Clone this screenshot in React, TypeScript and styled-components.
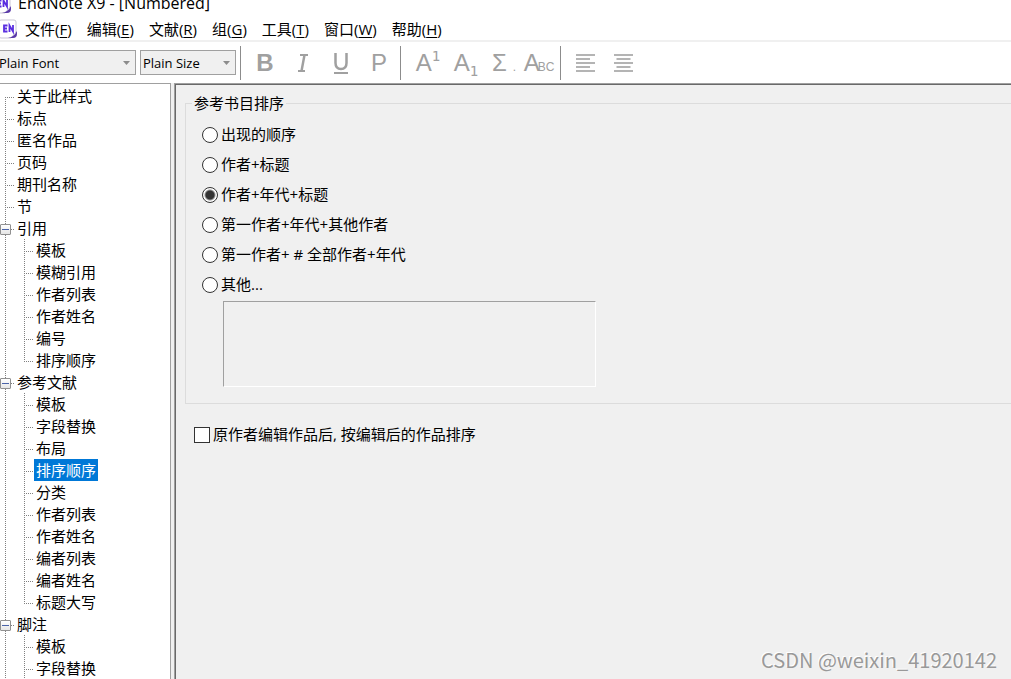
import React, { useState } from "react";
import styled, { createGlobalStyle, css } from "styled-components";

const ui = `"Open Sans", "Noto Sans CJK SC", sans-serif`;

const GlobalStyle = createGlobalStyle`
  * { box-sizing: border-box; }
  body {
    margin: 0;
    overflow: hidden;
    background: #fff;
    color: #000;
    font: 15px/22px ${ui};
  }
  button, select, textarea, input { font: inherit; color: inherit; }
`;

const Window = styled.div`
  display: flex;
  flex-direction: column;
  height: 100vh;
  overflow: hidden;
`;

const TitleBar = styled.header`
  display: flex;
  align-items: flex-end;
  gap: 6px;
  height: 14px;
  margin-left: -8px;
`;

const Title = styled.h1`
  margin: 0;
  font-size: 16px;
  line-height: 22px;
  font-weight: 400;
  white-space: nowrap;
`;

const MenuBar = styled.nav`
  display: flex;
  align-items: center;
  gap: 15px;
  height: 28px;
  margin-left: -2px;
  padding-top: 4px;
  border-bottom: 2px solid #f0f0f0;
`;

const MenuLogo = styled.span`
  display: flex;
  margin-right: -8px;
`;

const MenuItem = styled.button`
  padding: 0;
  border: 0;
  background: none;
  line-height: 22px;
  white-space: nowrap;

  u { text-underline-offset: 2px; }
`;

const Toolbar = styled.div`
  display: flex;
  align-items: center;
  flex: none;
  height: 41px;
`;

const SelectBox = styled.label<{ $width: number; $bleed?: boolean }>`
  display: grid;
  align-items: center;
  width: ${(p) => p.$width}px;
  height: 25px;
  margin-left: ${(p) => (p.$bleed ? -4 : 4)}px;
  border: 1px solid #a0a0a0;
  background: #f0f0f0;

  > * { grid-area: 1 / 1; }
  > svg { justify-self: end; margin-right: 5px; pointer-events: none; }
`;

const Select = styled.select`
  appearance: none;
  width: 100%;
  height: 23px;
  padding: 0 2px;
  border: 0;
  background: none;
  font-size: 13px;
`;

const Tools = styled.div`
  display: flex;
  align-items: center;
  height: 34px;
  margin-left: 4px;
  padding-left: 5px;
  border-left: 1px solid #8c8c8c;

  & + & { margin-left: 2px; }
`;

const Tool = styled.button<{ $inset?: boolean }>`
  display: flex;
  align-items: center;
  justify-content: center;
  width: 38px;
  height: 34px;
  padding: 0 0 0 ${(p) => (p.$inset ? 6 : 0)}px;
  border: 0;
  background: none;
  color: #a0a0a0;
  font: 24px/30px "Liberation Sans", sans-serif;

  sup, sub { font: 14px/14px "DejaVu Sans Mono", monospace; }
  sup { align-self: flex-start; margin-top: 3px; }
  sub { align-self: flex-end; margin-bottom: 2px; }
  b { font-weight: 700; }
`;

const Small = styled.small<{ $gap: number }>`
  align-self: flex-end;
  margin-left: ${(p) => p.$gap}px;
  font-size: 12px;
  line-height: 26px;
`;

const Body = styled.div`
  display: flex;
  flex: 1;
  gap: 3px;
  min-height: 0;
  background: #f0f0f0;
`;

const TreePane = styled.aside`
  flex: none;
  width: 171px;
  padding-top: 1px;
  overflow: hidden;
  border-top: 1px solid #a0a0a0;
  border-right: 1px solid #a0a0a0;
  background: #fff;
`;

const TreeList = styled.ul`
  margin: 0;
  padding: 0;
  list-style: none;
`;

const TreeRow = styled.div`
  display: flex;
  height: 22px;
`;

const dotsDown = "repeating-linear-gradient(180deg, #808080 0 1px, transparent 1px 2px)";
const dotsAcross = "repeating-linear-gradient(90deg, #808080 0 1px, transparent 1px 2px)";

type Line = "full" | "top" | "bottom";

const Rail = styled.span`
  flex: none;
  width: 19px;
  background: ${dotsDown} 5px 0 / 1px 22px no-repeat;
`;

const Branch = styled.span<{ $line: Line }>`
  display: flex;
  align-items: center;
  flex: none;
  width: 15px;
  height: 22px;
  ${(p) => css`
    background:
      ${dotsAcross} 5px 12px / 9px 1px no-repeat,
      ${dotsDown} 5px ${p.$line === "bottom" ? 12 : 0}px / 1px ${p.$line === "full" ? 22 : p.$line === "top" ? 12 : 10}px no-repeat;
  `}
`;

const Toggle = styled.button`
  display: flex;
  width: 11px;
  height: 11px;
  margin-top: 3px;
  padding: 0;
  border: 1px solid #919191;
  border-radius: 1px;
  background: linear-gradient(#fff, #e6e6e6);
`;

const Node = styled.button<{ $selected: boolean }>`
  padding: 0 2px;
  border: 0;
  background: ${(p) => (p.$selected ? "#0078d7" : "none")};
  color: ${(p) => (p.$selected ? "#fff" : "#000")};
  line-height: 22px;
  white-space: nowrap;
`;

const Editor = styled.main`
  position: relative;
  flex: 1;
  min-width: 0;
  padding: 9px 0 0 10px;
  border-top: 1px solid #a0a0a0;
  border-left: 1px solid #a0a0a0;
  box-shadow: inset 1px 1px 0 #696969;
`;

const Group = styled.fieldset`
  min-width: 0;
  margin: 0;
  padding: 7px 16px 16px;
  border: 1px solid #dcdcdc;
  border-right: 0;
`;

const Legend = styled.legend`
  margin-left: -10px;
  padding: 0 2px;
  line-height: 20px;
`;

const Option = styled.label`
  display: flex;
  align-items: center;
  gap: 3px;
  height: 30px;
  line-height: 20px;
  white-space: nowrap;

  > span { margin-bottom: 2px; }
`;

const Radio = styled.input`
  appearance: none;
  flex: none;
  width: 16px;
  height: 16px;
  margin: 0;
  border: 1px solid #333;
  border-radius: 50%;
  background: #fff;

  &:checked { background: radial-gradient(circle, #333 0 4px, #fff 6px); }
`;

const Custom = styled.textarea`
  display: block;
  width: 373px;
  max-width: 100%;
  height: 86px;
  margin: 1px 0 0 21px;
  border: 1px solid;
  border-color: #a0a0a0 #fff #fff #a0a0a0;
  background: none;
  resize: none;
`;

const CheckRow = styled(Option)`
  margin: 16px 0 0 9px;
`;

const Check = styled.input`
  appearance: none;
  flex: none;
  width: 16px;
  height: 16px;
  margin: 0;
  border: 1px solid #333;
  background: #fff;

  &:checked { background: #333; box-shadow: inset 0 0 0 3px #fff; }
`;

const Watermark = styled.p`
  position: absolute;
  right: 14px;
  bottom: 7px;
  margin: 0;
  color: #999;
  font: 20px/24px "Noto Sans CJK SC", sans-serif;
  text-shadow: -1px -1px 0 #fff;
`;

const Logo = () => (
  <svg width="20" height="20" viewBox="0 0 20 20" aria-hidden="true">
    <path d="M3 1h13a2 2 0 0 1 2 2v10l-5 6H3a2 2 0 0 1-2-2V3a2 2 0 0 1 2-2z" fill="#fff" stroke="#c9c5d6" />
    <path d="M19 12v3q0 4-4 4h-5q6-1 9-7z" fill="#5a3aa8" />
    <path d="M9.500 6.500H6v6h3.500M6 9.500h3M11.500 13V6.500l3.500 6V6" fill="none" stroke="#5a2ee0" strokeWidth="1.800" />
  </svg>
);

const Arrow = () => (
  <svg width="7" height="4" viewBox="0 0 7 4" aria-hidden="true">
    <path d="M0 0h7L3.500 4z" fill="#8c8c8c" />
  </svg>
);

const ItalicIcon = () => (
  <svg width="12" height="18" viewBox="0 0 12 18" fill="none" stroke="#a0a0a0" aria-hidden="true">
    <path d="M3 1h8M1 17h7" strokeWidth="2" />
    <path d="M7.500 1L4.500 17" strokeWidth="2.500" />
  </svg>
);

const UnderlineIcon = () => (
  <svg width="16" height="22" viewBox="0 0 16 22" fill="none" stroke="#a0a0a0" strokeWidth="2" aria-hidden="true">
    <path d="M2.500 1v10q0 6 5.500 6t5.500-6V1" strokeWidth="2.500" />
    <path d="M1 21h14" />
  </svg>
);

const AlignIcon = ({ centered }: { centered?: boolean }) => (
  <svg width="19" height="18" viewBox="0 0 19 18" stroke="#b4b4b4" strokeWidth="2" aria-hidden="true">
    <path d="M0 1h19M0 9h19M0 17h19" />
    <path d={centered ? "M2.500 5h14M2.500 13h14" : "M0 5h14M0 13h14"} />
  </svg>
);

const menus = [
  ["文件", "F"],
  ["编辑", "E"],
  ["文献", "R"],
  ["组", "G"],
  ["工具", "T"],
  ["窗口", "W"],
  ["帮助", "H"],
];

type TreeItem = { name: string; children?: string[]; partial?: boolean };

const tree: TreeItem[] = [
  { name: "关于此样式" },
  { name: "标点" },
  { name: "匿名作品" },
  { name: "页码" },
  { name: "期刊名称" },
  { name: "节" },
  { name: "引用", children: ["模板", "模糊引用", "作者列表", "作者姓名", "编号", "排序顺序"] },
  {
    name: "参考文献",
    children: ["模板", "字段替换", "布局", "排序顺序", "分类", "作者列表", "作者姓名", "编者列表", "编者姓名", "标题大写"],
  },
  { name: "脚注", children: ["模板", "字段替换"], partial: true },
];

const orders = ["出现的顺序", "作者+标题", "作者+年代+标题", "第一作者+年代+其他作者", "第一作者+ # 全部作者+年代", "其他..."];

export default function App() {
  const [selected, setSelected] = useState("参考文献/排序顺序");
  const [closed, setClosed] = useState<string[]>([]);
  const flip = (name: string) =>
    setClosed((c) => (c.includes(name) ? c.filter((n) => n !== name) : [...c, name]));

  return (
    <Window>
      <GlobalStyle />
      <TitleBar>
        <Logo />
        <Title>EndNote X9 - [Numbered]</Title>
      </TitleBar>
      <MenuBar>
        <MenuLogo>
          <Logo />
        </MenuLogo>
        {menus.map(([name, key]) => (
          <MenuItem key={key}>
            {name}(<u>{key}</u>)
          </MenuItem>
        ))}
      </MenuBar>
      <Toolbar>
        <SelectBox $width={140} $bleed>
          <Select aria-label="Font">
            <option>Plain Font</option>
          </Select>
          <Arrow />
        </SelectBox>
        <SelectBox $width={96}>
          <Select aria-label="Size">
            <option>Plain Size</option>
          </Select>
          <Arrow />
        </SelectBox>
        <Tools>
          <Tool aria-label="Bold"><b>B</b></Tool>
          <Tool aria-label="Italic"><ItalicIcon /></Tool>
          <Tool aria-label="Underline"><UnderlineIcon /></Tool>
          <Tool aria-label="Plain">P</Tool>
        </Tools>
        <Tools>
          <Tool aria-label="Superscript" $inset>A<sup>1</sup></Tool>
          <Tool aria-label="Subscript" $inset>A<sub>1</sub></Tool>
          <Tool aria-label="Symbol" $inset>Σ<Small $gap={6}>.</Small></Tool>
          <Tool aria-label="Small caps">A<Small $gap={-2}>BC</Small></Tool>
        </Tools>
        <Tools>
          <Tool aria-label="Align left"><AlignIcon /></Tool>
          <Tool aria-label="Align center"><AlignIcon centered /></Tool>
        </Tools>
      </Toolbar>
      <Body>
        <TreePane>
          <TreeList>
            {tree.map((item, i) => (
              <li key={item.name}>
                <TreeRow>
                  <Branch $line={i === 0 ? "bottom" : "full"}>
                    {item.children && (
                      <Toggle aria-label={item.name} onClick={() => flip(item.name)}>
                        <svg width="9" height="9" stroke="#4a63a8" aria-hidden="true">
                          <path d={closed.includes(item.name) ? "M1 4.500h7M4.500 1v7" : "M1 4.500h7"} />
                        </svg>
                      </Toggle>
                    )}
                  </Branch>
                  <Node $selected={selected === item.name} onClick={() => setSelected(item.name)}>
                    {item.name}
                  </Node>
                </TreeRow>
                {item.children && !closed.includes(item.name) && (
                  <TreeList>
                    {item.children.map((child, n, all) => {
                      const id = `${item.name}/${child}`;
                      return (
                        <li key={id}>
                          <TreeRow>
                            <Rail />
                            <Branch $line={n === all.length - 1 && !item.partial ? "top" : "full"} />
                            <Node $selected={selected === id} onClick={() => setSelected(id)}>
                              {child}
                            </Node>
                          </TreeRow>
                        </li>
                      );
                    })}
                  </TreeList>
                )}
              </li>
            ))}
          </TreeList>
        </TreePane>
        <Editor>
          <Group>
            <Legend>参考书目排序</Legend>
            {orders.map((text, i) => (
              <Option key={text}>
                <Radio type="radio" name="order" defaultChecked={i === 2} />
                <span>{text}</span>
              </Option>
            ))}
            <Custom aria-label="其他" />
          </Group>
          <CheckRow>
            <Check type="checkbox" />
            <span>原作者编辑作品后, 按编辑后的作品排序</span>
          </CheckRow>
          <Watermark>CSDN @weixin_41920142</Watermark>
        </Editor>
      </Body>
    </Window>
  );
}
